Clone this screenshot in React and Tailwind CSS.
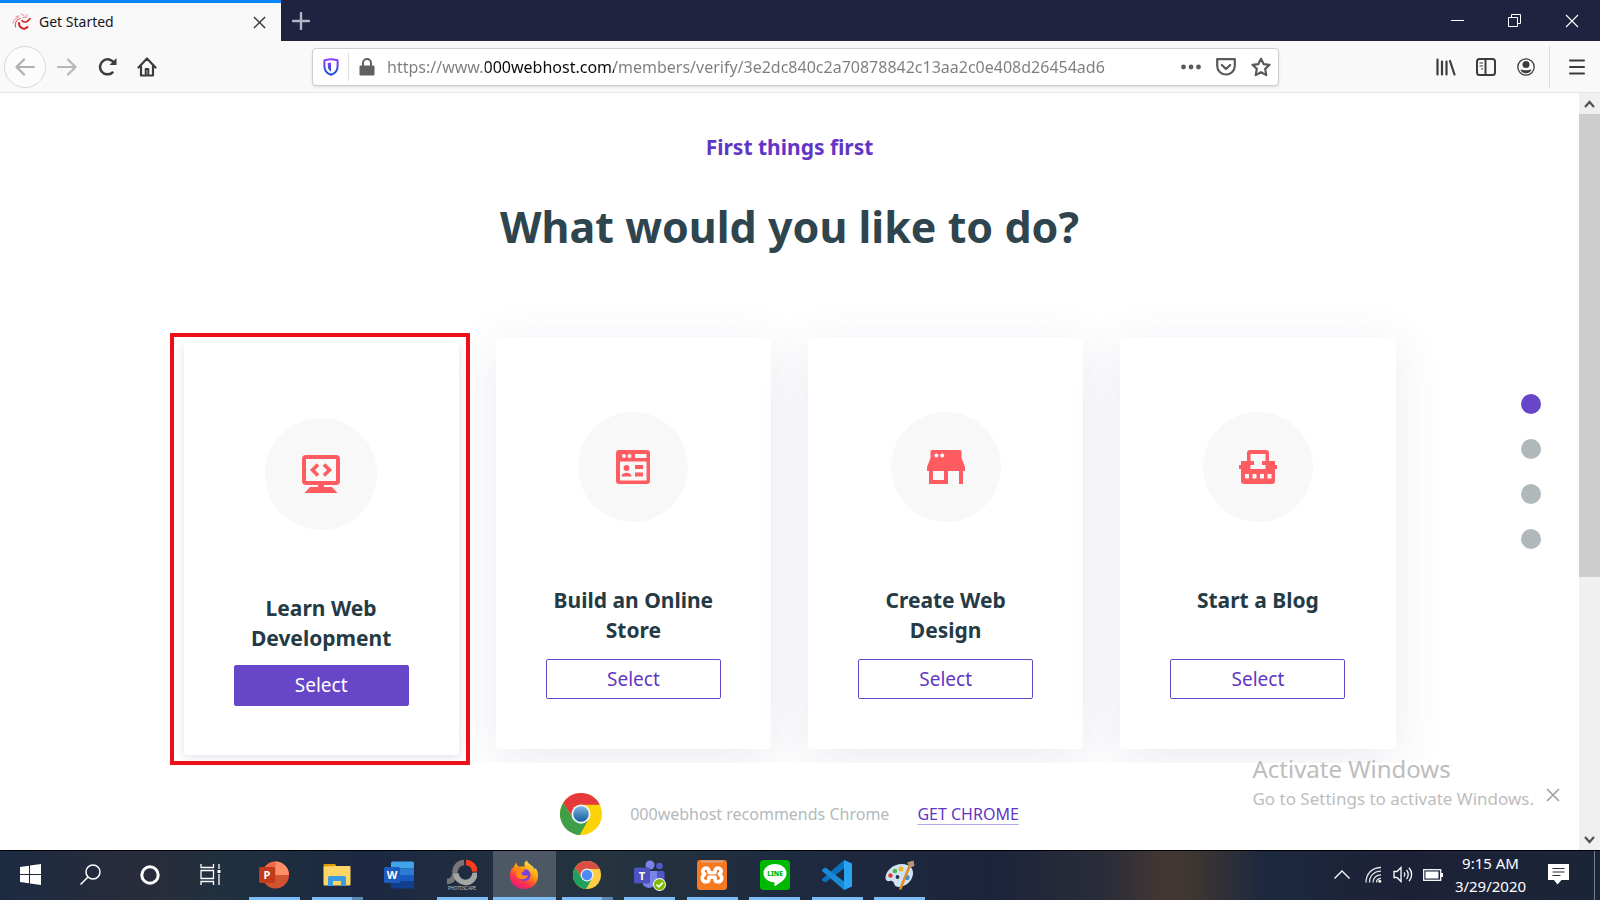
import React, { useState } from "react";

const URL_TEXT =
  "https://www.000webhost.com/members/verify/3e2dc840c2a70878842c13aa2c0e408d26454ad6";

/* ---------- Card icons ---------- */

function MonitorIcon() {
  return (
    <svg width="38" height="38" viewBox="0 0 38 38" fill="none">
      <rect x="2" y="2" width="34" height="26" rx="2" stroke="#ff5c62" strokeWidth="4" />
      <path d="M16 9.500 10.500 15l5.500 5.500M22 9.500l5.500 5.500-5.500 5.500" stroke="#ff5c62" strokeWidth="3.600" />
      <path d="M16 29h6v3h8l5.500 6h-33L8 32h8z" fill="#ff5c62" />
    </svg>
  );
}

function StoreIcon() {
  return (
    <svg width="34" height="34" viewBox="0 0 34 34">
      <path
        fill="#ff5c62"
        fillRule="evenodd"
        d="M3 0h28a3 3 0 0 1 3 3v28a3 3 0 0 1-3 3H3a3 3 0 0 1-3-3V3a3 3 0 0 1 3-3zM4 11.500v19h26.500v-19zM19 4v4h11.500V4z"
      />
      <circle cx="8" cy="6" r="2" fill="#f8f8f8" />
      <circle cx="13.500" cy="6" r="2" fill="#f8f8f8" />
      <circle cx="10.500" cy="18" r="2.900" fill="#ff5c62" />
      <path d="M5.500 26.500c0-3 3-3.800 5-3.800s5 .8 5 3.800z" fill="#ff5c62" />
      <path d="M19 15h8v4h-8zM19 22.500h8v4h-8z" fill="#ff5c62" />
    </svg>
  );
}

function DesignIcon() {
  return (
    <svg width="38" height="34" viewBox="0 0 38 34">
      <path
        fill="#ff5c62"
        fillRule="evenodd"
        d="M5 0h28a1.500 1.500 0 0 1 1.500 1.500V8L38 17v4h-2v13h-4V21H21v13H2V21H0v-4l3.500-9V1.500A1.500 1.500 0 0 1 5 0zM6 21v9h11v-9z"
      />
      <circle cx="9.500" cy="5.500" r="2" fill="#f8f8f8" />
      <circle cx="15.200" cy="5.500" r="2" fill="#f8f8f8" />
    </svg>
  );
}

function BlogIcon() {
  return (
    <svg width="38" height="34" viewBox="0 0 38 34">
      <path
        fill="#ff5c62"
        fillRule="evenodd"
        d="M11 0h16a3 3 0 0 1 3 3v8h6v4h2v4h-2v12a3 3 0 0 1-3 3H5a3 3 0 0 1-3-3V19H0v-4h2v-4h6V3a3 3 0 0 1 3-3zM11.500 4v7H15v4h-3.500v4h15v-4H23v-4h3.500V4zM6 24v4.500h4V24zM13.500 24v4.500h4V24zM21 24v4.500h4V24zM28.500 24v4.500h4V24z"
      />
    </svg>
  );
}

/* ---------- Browser icons ---------- */

function Favicon() {
  return (
    <svg width="20" height="18" viewBox="0 0 20 18" fill="none" strokeLinecap="round">
      <path d="M7 10c0 5 5 7.500 8.500 4" stroke="#d8232a" strokeWidth="2" />
      <path d="M10 7.500c2 2.500 5.500 2 8-2" stroke="#d8232a" strokeWidth="1.600" />
      <path d="M3.500 14c-1-4 1-8 5-8.500" stroke="#e26468" strokeWidth="1.200" />
      <path d="M1 10c.5-3 2.500-5 5-5.500M4 3.500 7 3M9 1l3 1.500M14 1.500l1.500 1.500M11 4.500l4-.5" stroke="#e98a8d" strokeWidth="1" />
    </svg>
  );
}

function CrossIcon({ size = 13, color = "#333", width = 1.5 }) {
  return (
    <svg width={size} height={size} viewBox="0 0 14 14" fill="none" stroke={color} strokeWidth={width}>
      <path d="M1 1l12 12M13 1 1 13" />
    </svg>
  );
}

function ShieldIcon() {
  return (
    <svg width="16" height="18" viewBox="0 0 16 18" fill="none">
      <defs>
        <linearGradient id="shield" x1="0" y1="0" x2="0" y2="1">
          <stop offset="0" stopColor="#8a3ffc" />
          <stop offset="1" stopColor="#0b4fd8" />
        </linearGradient>
      </defs>
      <path d="M8 1.200c2.500 0 4.500.6 6.600 1.200V8c0 4.500-2.600 7.500-6.600 8.800C4 15.500 1.400 12.500 1.400 8V2.400C3.500 1.800 5.500 1.200 8 1.200z" stroke="url(#shield)" strokeWidth="2" strokeLinejoin="round" />
      <path d="M8 4.500c-1.300 0-2.300.2-3.200.5V8c0 2.600 1.200 4.400 3.200 5.500z" fill="url(#shield)" />
    </svg>
  );
}

function LockIcon() {
  return (
    <svg width="16" height="18" viewBox="0 0 16 18">
      <rect x="0.500" y="7.500" width="15" height="10" rx="1.200" fill="#606060" />
      <path d="M4 8V5a4 4 0 0 1 8 0v3" fill="none" stroke="#606060" strokeWidth="2" />
    </svg>
  );
}

/* ---------- Taskbar icons ---------- */

function ChromeLogo({ size, soft }) {
  const id = soft ? "chrome-a" : "chrome-b";
  return (
    <svg width={size} height={size} viewBox="0 0 48 48">
      <defs>
        <linearGradient id={id} x1="0" y1="0" x2="0" y2="1">
          <stop offset="0" stopColor={soft ? "#7fb4e0" : "#4c8bf5"} />
          <stop offset="1" stopColor={soft ? "#135f9f" : "#4c8bf5"} />
        </linearGradient>
      </defs>
      <circle cx="24" cy="24" r="24" fill={soft ? "#fcd209" : "#ffcd42"} />
      <path d="M24 13.500h21.600A24 24 0 0 0 3.700 11.200L14.900 29.200z" fill={soft ? "#e5393a" : "#db4f42"} />
      <path d="M3.700 11.200A24 24 0 0 0 22.500 48l10.600-18.700-9.100 5.200-9.100-5.200z" fill={soft ? "#3d9f47" : "#1fa05d"} />
      <circle cx="24" cy="24" r="11" fill="#eef3f7" />
      <circle cx="24" cy="24" r="8.900" fill={`url(#${id})`} />
    </svg>
  );
}

function PowerPointIcon() {
  return (
    <svg width="30" height="28" viewBox="0 0 30 28">
      <circle cx="16.500" cy="14" r="13.500" fill="#d35230" />
      <path d="M16.500.5v13.500H3a13.500 13.500 0 0 1 13.500-13.500z" fill="#ed6c47" />
      <path d="M16.500.5A13.500 13.500 0 0 1 30 14H16.500z" fill="#ff8f6b" />
      <rect x="0" y="6" width="16" height="16" rx="1.500" fill="#c13b1b" />
      <text x="8" y="18" textAnchor="middle" fontSize="11" fontWeight="700" fill="#fff">P</text>
    </svg>
  );
}

function FolderIcon() {
  return (
    <svg width="28" height="24" viewBox="0 0 28 24">
      <path d="M1 1h11l2 3h-13z" fill="#e8a200" />
      <rect x="0.500" y="3" width="27" height="19.500" rx="1" fill="#ffd766" />
      <path d="M0.500 3.500V2a1 1 0 0 1 1-1h10l1.500 2z" fill="#dd9a00" />
      <path d="M5 23V14.500a1.500 1.500 0 0 1 1.500-1.500h15a1.500 1.500 0 0 1 1.500 1.500V23h-5v-5h-8v5z" fill="#3b9be0" />
    </svg>
  );
}

function WordIcon() {
  return (
    <svg width="30" height="28" viewBox="0 0 30 28">
      <path d="M8.500.5h20A1.500 1.500 0 0 1 30 2v5.500H7V2A1.500 1.500 0 0 1 8.500.5z" fill="#41a5ee" />
      <path d="M7 7.500h23V14H7z" fill="#2b7cd3" />
      <path d="M7 14h23v6.500H7z" fill="#185abd" />
      <path d="M7 20.500h23V26a1.500 1.500 0 0 1-1.500 1.500h-20A1.500 1.500 0 0 1 7 26z" fill="#103f91" />
      <rect x="0" y="6" width="16" height="16" rx="1.500" fill="#1b5cbe" />
      <text x="8" y="18" textAnchor="middle" fontSize="11" fontWeight="700" fill="#fff">W</text>
    </svg>
  );
}

function PhotoScapeIcon() {
  return (
    <svg width="30" height="32" viewBox="0 0 30 32" fill="none">
      <path d="M17 3.500a9.500 9.500 0 0 0-9 9c0 6-3 10-8 10" stroke="#777" strokeWidth="5.500" />
      <path d="M28 13.500a9.500 9.500 0 0 1-19 1" stroke="#a5a5a5" strokeWidth="5.500" />
      <path d="M19 3.500a9.500 9.500 0 0 1 9 9" stroke="#ff3d1c" strokeWidth="5.500" />
      <text x="15" y="31" textAnchor="middle" fontSize="4.400" fill="#c5c5c5">PHOTOSCAPE</text>
    </svg>
  );
}

function FirefoxIcon() {
  return (
    <svg width="30" height="30" viewBox="0 0 30 30">
      <defs>
        <linearGradient id="fox" x1="0.800" y1="0" x2="0.200" y2="1">
          <stop offset="0" stopColor="#fff44f" />
          <stop offset="0.400" stopColor="#ff980e" />
          <stop offset="0.700" stopColor="#ff3647" />
          <stop offset="1" stopColor="#e31587" />
        </linearGradient>
      </defs>
      <path d="M16 6.500C14.500 3.500 16 1.500 18 .5c1 3.500 4.500 4 6.500 7 .8 1 1 2 1 2l1-1.500c2 2.500 3 6 2.500 9.500C28 24.500 22.500 29 15 29 7 29 1 23.500 1 16c0-4 1-7 2.500-9 0 1 .2 1.500.5 2C4.500 6.500 6 4 7.500 2.500 7.500 4.500 8.500 6 10 6.500z" fill="url(#fox)" />
      <circle cx="15.500" cy="15" r="6" fill="#7a3fe0" />
      <path d="M4 9.500c3-3 7-2 8-1 2 0 4 .5 3.500 2.500-1.500 1-3 1-3 2.500 1 2.500 5 3 7 1-1 4.500-6 6-9.500 4C7 17 6.500 13 8 11c-1.500-.5-3-.5-4-1.500z" fill="#ff8a16" />
    </svg>
  );
}

function TeamsIcon() {
  return (
    <svg width="32" height="32" viewBox="0 0 32 32">
      <circle cx="16" cy="6" r="4.500" fill="#7b83eb" />
      <circle cx="25.500" cy="7" r="3.300" fill="#5059c9" />
      <path d="M22 12h7a1.500 1.500 0 0 1 1.500 1.500V20a5 5 0 0 1-8.500 4z" fill="#5059c9" />
      <path d="M9 12h14v10a8 8 0 0 1-14 4z" fill="#7b83eb" />
      <rect x="0" y="8.500" width="16" height="16" rx="1.500" fill="#4b53bc" />
      <text x="8" y="20.500" textAnchor="middle" fontSize="11" fontWeight="700" fill="#fff">T</text>
      <circle cx="25.500" cy="25.500" r="6.500" fill="#fff" />
      <circle cx="25.500" cy="25.500" r="5.500" fill="#7fba00" />
      <path d="m22.500 25.500 2.300 2.300 4-4.300" fill="none" stroke="#fff" strokeWidth="1.700" />
    </svg>
  );
}

function XamppIcon() {
  return (
    <svg width="30" height="30" viewBox="0 0 30 30" fill="none">
      <rect width="30" height="30" rx="3" fill="#f47920" />
      <path d="M4 1.500h22" stroke="#d9a684" strokeWidth="2" />
      <path
        d="M10 8.200c-4-1-5.200 3.500-3 5 .8.500 1 1.200 0 1.800-3 2-2 7 2.500 6.800 3-.2 2.500-4 2.500-4.500h6c0 .5-.5 4.300 2.500 4.500 4.500.2 5.500-4.800 2.500-6.800-1-.6-.8-1.300 0-1.800 2.200-1.500 1-6-3-5-2.500.6-2 3.500-2 4.500h-6c0-1 .5-3.900-2-4.500z"
        stroke="#fff"
        strokeWidth="3.600"
        strokeLinejoin="round"
      />
    </svg>
  );
}

function LineIcon() {
  return (
    <svg width="30" height="30" viewBox="0 0 30 30">
      <rect width="30" height="30" rx="3.500" fill="#00b900" />
      <path d="M15 4C8.500 4 3.500 8 3.500 13.200c0 4.700 4.300 8.500 10 9.100 1.300.2 1.200 1 .9 3.200 0 .7.300.7.800.4 1.500-.8 6-3.700 8.500-6.200 1.800-1.800 2.800-4 2.800-6.500C26.500 8 21.500 4 15 4z" fill="#fff" />
      <text x="15" y="15.800" textAnchor="middle" fontSize="6.500" fontWeight="900" fill="#00b900">LINE</text>
    </svg>
  );
}

function VSCodeIcon() {
  return (
    <svg width="30" height="30" viewBox="0 0 30 30">
      <path d="M22 0 30 3.500v23L22 30z" fill="#2aa5f2" />
      <path d="M22 0v8.500L3.500 22.500 0 20.500v-1.500z" fill="#0a72bd" />
      <path d="M22 30v-8.500L3.500 7.500 0 9.500V11z" fill="#1a8ad6" />
    </svg>
  );
}

function PaintIcon() {
  return (
    <svg width="30" height="30" viewBox="0 0 30 30">
      <path d="M17 4C8 4 .5 11 .5 18c0 2.500 2 3.500 4 3 2.500-.6 4 .5 4.500 2.500.8 3.500 4.500 4 8 3C23.500 24.500 28 19 28 13c0-5.500-4-9-11-9z" fill="#cfe3f2" />
      <circle cx="5.500" cy="15.500" r="2.200" fill="#e03a3a" />
      <circle cx="10" cy="11" r="2.300" fill="#4fb848" />
      <circle cx="16" cy="9" r="2.500" fill="#f2b52c" />
      <circle cx="12.500" cy="17" r="1.900" fill="#26344a" />
      <circle cx="22" cy="17.500" r="2.600" fill="#3f8fd8" />
      <path d="M25 5 15.500 28.500" stroke="#e08b2d" strokeWidth="2.600" strokeLinecap="round" />
      <path d="m22 2.500 6.500-2 1 5.500-4 1.500z" fill="#b99872" />
    </svg>
  );
}

const cards = [
  { title: "Learn Web Development", icon: <MonitorIcon /> },
  { title: "Build an Online Store", icon: <StoreIcon /> },
  { title: "Create Web Design", icon: <DesignIcon /> },
  { title: "Start a Blog", icon: <BlogIcon /> },
];

const apps = [
  { name: "PowerPoint", icon: <PowerPointIcon />, bar: "open" },
  { name: "File Explorer", icon: <FolderIcon />, bar: "multi" },
  { name: "Word", icon: <WordIcon />, bar: "none" },
  { name: "PhotoScape", icon: <PhotoScapeIcon />, bar: "open" },
  { name: "Firefox", icon: <FirefoxIcon />, bar: "active" },
  { name: "Chrome", icon: <ChromeLogo size={28} />, bar: "multi" },
  { name: "Teams", icon: <TeamsIcon />, bar: "open" },
  { name: "XAMPP", icon: <XamppIcon />, bar: "open" },
  { name: "LINE", icon: <LineIcon />, bar: "open" },
  { name: "Visual Studio Code", icon: <VSCodeIcon />, bar: "open" },
  { name: "Paint", icon: <PaintIcon />, bar: "open" },
];

function TitleBar() {
  return (
    <div className="flex h-[41px] shrink-0 bg-[#202340]">
      <div className="flex w-[281px] items-center border-t-[3px] border-[#0a84ff] bg-[#f9f9f9] pr-[15px] pl-3">
        <Favicon />
        <span className="ml-[7px] flex-1 text-sm text-[#15141a]">Get Started</span>
        <button aria-label="Close tab" className="flex">
          <CrossIcon />
        </button>
      </div>
      <button aria-label="New tab" className="flex w-10 items-center justify-center">
        <svg width="18" height="18" viewBox="0 0 18 18" stroke="#b5b6c4" strokeWidth="2.400" strokeLinecap="round">
          <path d="M9 1v16M1 9h16" />
        </svg>
      </button>
      <div className="ml-auto flex">
        <button aria-label="Minimize" className="flex w-[57px] items-center justify-center">
          <svg width="13" height="13" viewBox="0 0 13 13" stroke="#fff">
            <path d="M0 6.500h13" />
          </svg>
        </button>
        <button aria-label="Restore" className="flex w-[57px] items-center justify-center">
          <svg width="13" height="13" viewBox="0 0 13 13" fill="none" stroke="#fff">
            <path d="M.5 3.500h9v9h-9zM3.500 3.500v-3h9v9h-3" />
          </svg>
        </button>
        <button aria-label="Close" className="flex w-[57px] items-center justify-center">
          <CrossIcon size={14} color="#fff" width={1.1} />
        </button>
      </div>
    </div>
  );
}

function Toolbar() {
  return (
    <div className="flex h-[52px] shrink-0 items-center border-b border-[#e6e6e6] bg-[#f9f9f9]">
      <div className="flex w-[312px] items-center pl-1">
        <button aria-label="Back" className="flex h-[42px] w-[42px] items-center justify-center rounded-full border border-[#d8d8d8] bg-[#fcfcfc]">
          <svg width="20" height="18" viewBox="0 0 20 18" fill="none" stroke="#b0b0b0" strokeWidth="2.200" strokeLinecap="round" strokeLinejoin="round">
            <path d="M19 9H1.500M9 1.500 1.500 9 9 16.500" />
          </svg>
        </button>
        <button aria-label="Forward" className="flex w-[42px] items-center justify-center">
          <svg width="20" height="18" viewBox="0 0 20 18" fill="none" stroke="#b8b8b8" strokeWidth="2.200" strokeLinecap="round" strokeLinejoin="round">
            <path d="M1 9h17.500M11 1.500 18.500 9 11 16.500" />
          </svg>
        </button>
        <button aria-label="Reload" className="flex w-10 items-center justify-center">
          <svg width="20" height="18" viewBox="0 0 20 18" fill="none" stroke="#3c3c3c" strokeWidth="2.500">
            <path d="M14.500 14.500A7.500 7.500 0 1 1 16 5" strokeLinecap="round" />
            <path d="M18.500 0v7h-7z" fill="#3c3c3c" stroke="none" />
          </svg>
        </button>
        <button aria-label="Home" className="flex w-[38px] items-center justify-center">
          <svg width="20" height="20" viewBox="0 0 20 20" fill="none" stroke="#3c3c3c" strokeWidth="2.200" strokeLinecap="round" strokeLinejoin="round">
            <path d="M1.500 10.500 10 1.500l8.500 9M4 9v9.500h12V9" />
            <path d="M8.700 17.500v-5.500h2.600v5.500" strokeWidth="2" />
          </svg>
        </button>
      </div>

      <div className="flex h-[38px] min-w-0 flex-1 items-center rounded-sm border border-[#cfcfcf] bg-white shadow-sm">
        <button aria-label="Tracking protection" className="flex w-[35px] justify-center">
          <ShieldIcon />
        </button>
        <span className="h-7 w-px bg-[#e0e0e0]" />
        <button aria-label="Connection is secure" className="flex w-[35px] justify-center">
          <LockIcon />
        </button>
        {/* the domain part of the address is darker than the rest */}
        <input
          aria-label="Address"
          type="text"
          defaultValue={URL_TEXT}
          className="ml-[3px] min-w-0 flex-1 bg-[linear-gradient(to_right,#7d7d7d_98px,#0c0c0d_98px,#0c0c0d_227px,#7d7d7d_227px)] bg-clip-text text-base text-transparent outline-none"
        />
        <button aria-label="Page actions" className="flex w-[35px] justify-center">
          <svg width="20" height="6" viewBox="0 0 20 6" fill="#5a5a5a">
            <circle cx="2.500" cy="3" r="2.400" />
            <circle cx="10" cy="3" r="2.400" />
            <circle cx="17.500" cy="3" r="2.400" />
          </svg>
        </button>
        <button aria-label="Save to Pocket" className="flex w-[35px] justify-center">
          <svg width="20" height="18" viewBox="0 0 20 18" fill="none" stroke="#5a5a5a" strokeWidth="2.200" strokeLinecap="round" strokeLinejoin="round">
            <path d="M1.200 1.200h17.600v6.500a8.800 8.800 0 0 1-17.600 0z" />
            <path d="m5.800 7 4.200 4 4.200-4" />
          </svg>
        </button>
        <button aria-label="Bookmark this page" className="flex w-[35px] justify-center">
          <svg width="20" height="20" viewBox="0 0 20 20" fill="none" stroke="#5a5a5a" strokeWidth="2.200" strokeLinejoin="round">
            <path d="m10 1.700 2.600 5.400 5.900.7-4.300 4.100 1.100 6.200L10 15.200l-5.300 2.900 1.100-6.200L1.500 7.800l5.900-.7z" />
          </svg>
        </button>
      </div>

      <div className="flex w-[321px] items-center justify-end">
        <button aria-label="Library" className="flex w-10 justify-center">
          <svg width="20" height="18" viewBox="0 0 20 18" stroke="#3c3c3c" strokeWidth="2.200" strokeLinecap="round">
            <path d="M1.500 1.500v15M6 3.500v13M10.500 3.500v13M14 3l4.500 13.500" />
          </svg>
        </button>
        <button aria-label="Sidebars" className="flex w-10 justify-center">
          <svg width="20" height="18" viewBox="0 0 20 18" fill="none" stroke="#3c3c3c" strokeWidth="2">
            <rect x="1" y="1" width="18" height="16" rx="2.500" />
            <path d="M9.500 1v16" />
            <path d="M3.500 5h3.500M3.500 8h3.500M5 11h2" strokeWidth="1.200" />
          </svg>
        </button>
        <button aria-label="Account" className="flex w-10 justify-center">
          <svg width="18" height="18" viewBox="0 0 18 18">
            <circle cx="9" cy="9" r="8.200" fill="none" stroke="#3c3c3c" strokeWidth="1.300" />
            <circle cx="9" cy="6.500" r="3.500" fill="#3c3c3c" />
            <path d="M3.500 11.300c3 1.300 8 1.300 11 0-.5 2.600-2.900 4-5.500 4s-5-1.400-5.500-4z" fill="#3c3c3c" />
          </svg>
        </button>
        <span className="ml-[3px] h-[42px] w-px bg-[#dcdcdc]" />
        <button aria-label="Menu" className="flex w-[50px] justify-center pl-[3px]">
          <svg width="16" height="16" viewBox="0 0 16 16" stroke="#3c3c3c" strokeWidth="2" strokeLinecap="round">
            <path d="M1 1.500h14M1 8h14M1 14.500h14" />
          </svg>
        </button>
      </div>
    </div>
  );
}

function Card({ card, selected, onSelect }) {
  return (
    <div
      className={`flex flex-col items-center rounded-sm bg-white ${
        selected
          ? "relative mt-[6px] -mb-[6px] pt-[75px] shadow-[0_2px_10px_rgba(60,70,130,0.16)]"
          : "pt-[75px] shadow-[0_10px_50px_rgba(60,70,130,0.11)]"
      }`}
    >
      {selected && (
        <span className="pointer-events-none absolute -top-[10px] -right-[11px] -bottom-[10px] -left-[14px] border-4 border-[#ee1018]" />
      )}
      <div
        className={`flex items-center justify-center rounded-full bg-[#f8f8f8] ${
          selected ? "h-28 w-28" : "h-[110px] w-[110px]"
        }`}
      >
        {card.icon}
      </div>
      <h3 className="mt-[63px] h-[60px] w-[175px] text-center text-[21px] leading-[30px] font-bold text-[#243b45]">
        {card.title}
      </h3>
      <button
        onClick={onSelect}
        className={`w-[175px] rounded-xs border border-[#6747c7] text-[19px] ${
          selected
            ? "mt-3 mb-12 h-[41px] bg-[#6747c7] text-white"
            : "mt-[14px] mb-[50px] h-10 bg-white text-[#6236c5]"
        }`}
      >
        Select
      </button>
    </div>
  );
}

function Page() {
  const [selected, setSelected] = useState(0);

  return (
    <main className="relative flex min-w-0 flex-1 flex-col bg-white">
      <section className="flex flex-1 flex-col items-center pt-[38px]">
        <p className="text-[21px] leading-8 font-bold text-[#6236c5]">First things first</p>
        <h1 className="mt-[34px] text-[43px] leading-[60px] font-bold text-[#2f454e]">
          What would you like to do?
        </h1>
        <div className="mt-20 grid w-full max-w-[1212px] grid-cols-4 gap-[37px]">
          {cards.map((card, index) => (
            <Card
              key={card.title}
              card={card}
              selected={selected === index}
              onSelect={() => setSelected(index)}
            />
          ))}
        </div>
      </section>

      {/* Chrome recommendation */}
      <div className="flex h-[87px] items-center justify-center gap-7 bg-white pt-[14px] text-base">
        <ChromeLogo size={42} soft />
        <span className="text-[#b3b9bc]">000webhost recommends Chrome</span>
        <a href="#chrome" className="text-[#6236c5] underline decoration-[#b9a6ea] underline-offset-4">
          GET CHROME
        </a>
      </div>

      {/* Step dots */}
      <nav className="absolute top-[301px] right-[38px] flex flex-col gap-[25px]">
        <a href="#step1" aria-label="Step 1" className="h-5 w-5 rounded-full bg-[#6747c7]" />
        <a href="#step2" aria-label="Step 2" className="h-5 w-5 rounded-full bg-[#b0b8bb]" />
        <a href="#step3" aria-label="Step 3" className="h-5 w-5 rounded-full bg-[#b0b8bb]" />
        <a href="#step4" aria-label="Step 4" className="h-5 w-5 rounded-full bg-[#b0b8bb]" />
      </nav>

      {/* Windows watermark and the banner's close button */}
      <div className="absolute right-[19px] bottom-[37px] flex items-center gap-3">
        <div className="text-[#bdbdbd]">
          <p className="text-2xl leading-8">Activate Windows</p>
          <p className="text-[17px] leading-7">Go to Settings to activate Windows.</p>
        </div>
        <button aria-label="Dismiss" className="mt-6 flex">
          <CrossIcon size={14} color="#9da3a8" width={1.7} />
        </button>
      </div>
    </main>
  );
}

function Scrollbar() {
  return (
    <div className="flex w-[21px] shrink-0 flex-col bg-[#f0f0f0]">
      <div className="flex h-[21px] items-center justify-center">
        <svg width="11" height="8" viewBox="0 0 11 8" fill="none" stroke="#505050" strokeWidth="2.200">
          <path d="m1 7 4.500-5L10 7" />
        </svg>
      </div>
      <div className="h-[463px] bg-[#cdcdcd]" />
      <div className="mt-auto flex h-5 items-center justify-center">
        <svg width="11" height="8" viewBox="0 0 11 8" fill="none" stroke="#505050" strokeWidth="2.200">
          <path d="m1 1 4.500 5L10 1" />
        </svg>
      </div>
    </div>
  );
}

function AppBar({ type }) {
  if (type === "none") return null;
  if (type === "multi") {
    return (
      <span className="absolute bottom-0 left-[6px] flex h-[3px] w-[51px]">
        <span className="flex-1 bg-[#7cbcf8]" />
        <span className="w-[11px] bg-[#5b8bb5]" />
      </span>
    );
  }
  return (
    <span
      className={`absolute bottom-0 h-[3px] bg-[#7cbcf8] ${
        type === "active" ? "inset-x-0" : "left-[6px] w-[51px]"
      }`}
    />
  );
}

function Taskbar() {
  return (
    <footer className="flex h-[50px] shrink-0 border-t border-black bg-[linear-gradient(to_right,#1c2a42_0%,#292c3a_9%,#20303f_14%,#1c2841_23%,#25343f_38%,#1e2a3f_50%,#1c243b_62%,#2a2d38_69%,#453833_73%,#3b3532_75%,#1c283e_79%,#1d2137_88%,#1b2538_100%)]">
      <div className="flex pb-[2px]">
        <button aria-label="Start" className="flex w-[60px] items-center justify-center">
          <svg width="21" height="21" viewBox="0 0 21 21" fill="#fff">
            <path d="M0 3l9-1.300V10H0zM10 1.500 21 0v10H10zM0 11h9v8.300L0 18zM10 11h11v10l-11-1.500z" />
          </svg>
        </button>
        <button aria-label="Search" className="flex w-[60px] items-center justify-center">
          <svg width="21" height="21" viewBox="0 0 21 21" fill="none" stroke="#fff" strokeWidth="1.500">
            <circle cx="13" cy="8" r="7" />
            <path d="M8 13 .5 20.500" />
          </svg>
        </button>
        <button aria-label="Cortana" className="flex w-[60px] items-center justify-center">
          <svg width="20" height="20" viewBox="0 0 20 20" fill="none" stroke="#fff" strokeWidth="3">
            <circle cx="10" cy="10" r="8.200" />
          </svg>
        </button>
        <button aria-label="Task View" className="flex w-[60px] items-center justify-center">
          <svg width="21" height="21" viewBox="0 0 21 21" fill="none" stroke="#fff" strokeWidth="1.300">
            <path d="M1 0v3.500h12.500V0M1 21v-3.500h12.500V21M1 6.500h12.500v8H1zM19 0v5M19 10v11" />
            <path d="M17.500 6h3v3h-3z" fill="#fff" stroke="none" />
          </svg>
        </button>
      </div>

      <div className="ml-[3px] grid w-[688px] grid-cols-11">
        {apps.map((app) => (
          <button
            key={app.name}
            aria-label={app.name}
            className={`relative flex items-center justify-center pb-[2px] ${
              app.bar === "active" ? "bg-[#4c5863]" : ""
            }`}
          >
            {app.icon}
            <AppBar type={app.bar} />
          </button>
        ))}
      </div>

      <div className="ml-auto flex items-center text-white">
        <div className="flex items-center pb-[2px]">
          <button aria-label="Show hidden icons" className="flex w-8 justify-center">
            <svg width="16" height="9" viewBox="0 0 16 9" fill="none" stroke="#fff" strokeWidth="1.300">
              <path d="m.5 8.500 7.500-7.500 7.500 7.500" />
            </svg>
          </button>
          <button aria-label="Network" className="flex w-[30px] justify-center">
            <svg width="17" height="17" viewBox="0 0 17 17" fill="none" stroke="#e5e5e5" strokeWidth="1.300">
              <path d="M1 16.500C1 8 7 1.500 16 1.500M4.500 16.500C4.500 10 9 5.200 16 5.200M8 16.500c0-4.500 3.300-7.700 8-7.700M11.500 16.500c0-2.500 1.800-4.200 4.500-4.200" />
              <circle cx="14.800" cy="15.300" r="1.500" fill="#fff" stroke="none" />
            </svg>
          </button>
          <button aria-label="Volume" className="flex w-[30px] justify-center">
            <svg width="20" height="17" viewBox="0 0 20 17" fill="none" stroke="#fff" strokeWidth="1.300">
              <path d="M1 5.500h3l4-4v14l-4-4H1zM11 6.500c1 1 1 3 0 4M13.500 4c2.300 2.500 2.300 6.500 0 9M16 1.700c3.500 3.800 3.500 9.800 0 13.600" />
            </svg>
          </button>
          <button aria-label="Battery" className="flex w-[30px] justify-center">
            <svg width="20" height="12" viewBox="0 0 20 12">
              <rect x="0.700" y="0.700" width="17" height="10.600" fill="none" stroke="#fff" strokeWidth="1.300" />
              <path d="M2.500 2.500h13v7h-13zM18 4h2v4h-2z" fill="#fff" />
            </svg>
          </button>
          <button className="flex w-[85px] flex-col items-center text-[15px] leading-[23px]">
            <span>9:15 AM</span>
            <span>3/29/2020</span>
          </button>
          <button aria-label="Notifications" className="flex w-[50px] justify-center">
            <svg width="21" height="21" viewBox="0 0 21 21">
              <path d="M0 0h21v16h-7.500L9.500 20.500 6 16H0z" fill="#fff" />
              <path d="M4.500 4.500h12M4.500 8h12M4.500 11.500h8" stroke="#27303f" strokeWidth="1.200" />
            </svg>
          </button>
        </div>
        <span className="ml-[11px] h-[49px] w-[6px] border-l border-[#74808c]" />
      </div>
    </footer>
  );
}

export default function App() {
  return (
    <div className="flex h-screen flex-col overflow-hidden bg-white font-['Noto_Sans','Open_Sans',sans-serif]">
      <TitleBar />
      <Toolbar />
      <div className="flex min-h-0 flex-1">
        <Page />
        <Scrollbar />
      </div>
      <Taskbar />
    </div>
  );
}
